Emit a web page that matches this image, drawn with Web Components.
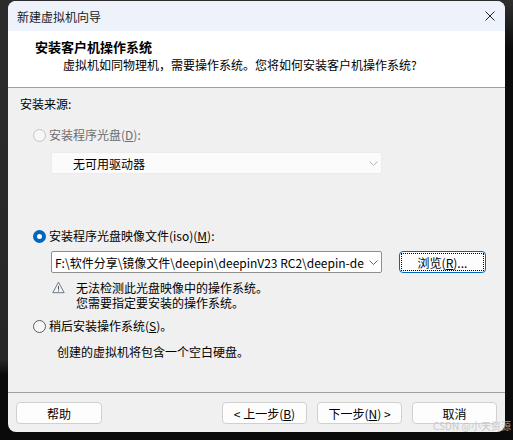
<!DOCTYPE html>
<html lang="zh">
<head>
<meta charset="utf-8">
<title>新建虚拟机向导</title>
<style>
  html, body { margin: 0; height: 100%; }
  body {
    width: 513px;
    height: 440px;
    overflow: hidden;
    background:
      linear-gradient(#2f2f2f, #0b0b0b 50px) right top / 8px 100% no-repeat,
      linear-gradient(#2b2b2b 0, #2b2b2b 55px, #262626 360px, #0a0a0a 375px);
    font-family: "Noto Sans CJK SC", "Noto Sans", sans-serif;
    font-size: 12px;
    color: #000;
  }
</style>
</head>
<body>
<wizard-window>
  <title-bar slot="title">新建虚拟机向导</title-bar>
  <wizard-header slot="header" heading="安装客户机操作系统">虚拟机如同物理机，需要操作系统。您将如何安装客户机操作系统?</wizard-header>

  <source-label>安装来源:</source-label>

  <radio-option disabled style="margin-top:13px">安装程序光盘(<u>D</u>):</radio-option>
  <combo-box disabled style="margin-top:8px;margin-left:31px"><span style="padding-left:18px">无可用驱动器</span></combo-box>

  <radio-option checked style="margin-top:53px">安装程序光盘映像文件(iso)(<u>M</u>):</radio-option>
  <file-row style="margin-top:6px;margin-left:31px">
    <combo-box>F:\软件分享\镜像文件\deepin\deepinV23 RC2\deepin-de</combo-box>
    <wizard-button focused style="width:87px;margin-left:17px">浏览(<u>R</u>)...</wizard-button>
  </file-row>
  <warning-note style="margin-top:7px">无法检测此光盘映像中的操作系统。<br>您需要指定要安装的操作系统。</warning-note>

  <radio-option style="margin-top:7px">稍后安装操作系统(<u>S</u>)。</radio-option>
  <source-label style="margin-top:8px;margin-left:37px">创建的虚拟机将包含一个空白硬盘。</source-label>

  <wizard-button slot="help" style="width:86px">帮助</wizard-button>
  <wizard-button slot="nav" style="width:85px">&lt; 上一步(<u>B</u>)</wizard-button>
  <wizard-button slot="nav" style="width:85px">下一步(<u>N</u>) &gt;</wizard-button>
  <wizard-button slot="nav" style="width:85px">取消</wizard-button>
</wizard-window>
<water-mark>CSDN @小天资源</water-mark>

<script>
// Small helper so every element below gets an open shadow root from its markup.
class ShadowElement extends HTMLElement {
  constructor (markup) {
    super()
    this.attachShadow({ mode: 'open' }).innerHTML = markup
  }
}

customElements.define('wizard-window', class extends ShadowElement {
  constructor () {
    super(`
      <style>
        :host {
          display: flex;
          flex-direction: column;
          width: 497px;
          height: 431px;
          margin: 1px 0 0 8px;
          background: #f0f0f0;
          border-radius: 8px;
          overflow: hidden;
        }
        .body { flex: 1; display: flex; flex-direction: column; padding: 7px 0 0 12px; }
        footer {
          display: flex;
          justify-content: space-between;
          height: 40px;
          box-sizing: border-box;
          border-top: 1px solid #a0a0a0;
          padding: 9px 8px 0 8px;
        }
        .nav { display: flex; gap: 10px; }
      </style>
      <slot name="title"></slot>
      <slot name="header"></slot>
      <div class="body"><slot></slot></div>
      <footer>
        <slot name="help"></slot>
        <div class="nav"><slot name="nav"></slot></div>
      </footer>
    `)
  }
})

customElements.define('title-bar', class extends ShadowElement {
  constructor () {
    super(`
      <style>
        :host {
          display: flex;
          align-items: center;
          justify-content: space-between;
          height: 30px;
          padding: 0 10px 0 9px;
          background: #eef2fa;
          font-size: 12px;
          color: #1a1a1a;
        }
        svg { display: block; }
      </style>
      <span><slot></slot></span>
      <svg width="10" height="10" viewBox="0 0 10 10"><path d="M.5.5l9 9M9.5.5l-9 9" stroke="#222" fill="none"/></svg>
    `)
  }
})

customElements.define('wizard-header', class extends ShadowElement {
  constructor () {
    super(`
      <style>
        :host {
          display: block;
          height: 57px;
          box-sizing: border-box;
          background: #fff;
          border-bottom: 1px solid #a0a0a0;
          padding: 6px 0 0 27px;
        }
        h1 { margin: 0; font-size: 13px; line-height: 19px; font-weight: 700; }
        p { margin: 0 0 0 28px; font-size: 12px; line-height: 18px; }
      </style>
      <h1></h1>
      <p><slot></slot></p>
    `)
    this.shadowRoot.querySelector('h1').textContent = this.getAttribute('heading')
  }
})

customElements.define('source-label', class extends ShadowElement {
  constructor () {
    super(`
      <style>
        :host { display: block; font-size: 12px; line-height: 18px; }
      </style>
      <slot></slot>
    `)
  }
})

customElements.define('radio-option', class extends ShadowElement {
  constructor () {
    super(`
      <style>
        :host {
          display: flex;
          align-items: center;
          gap: 3px;
          margin-left: 13px;
          font-size: 12px;
          line-height: 18px;
        }
        :host([disabled]) { color: #6d6d6d; }
        i {
          width: 13px;
          height: 13px;
          box-sizing: border-box;
          border: 1px solid #5c5c5c;
          border-radius: 50%;
          background: #f6f6f6;
        }
        :host([disabled]) i { border-color: #c4c4c4; }
        :host([checked]) i { border: 4px solid #0067c0; background: #fff; }
      </style>
      <i></i>
      <span><slot></slot></span>
    `)
  }
})

customElements.define('combo-box', class extends ShadowElement {
  constructor () {
    super(`
      <style>
        :host {
          display: flex;
          align-items: center;
          width: 331px;
          height: 22px;
          box-sizing: border-box;
          background: #fff;
          border: 1px solid #8e8e8e;
          border-radius: 2px;
          font-size: 12px;
        }
        :host([disabled]) { background: #fbfbfb; border-color: #ececec; }
        .text { flex: 1; min-width: 0; overflow: hidden; white-space: nowrap; padding-left: 3px; line-height: 19px; }
        svg { flex: none; margin: 0 3px 0 4px; }
        :host([disabled]) path { stroke: #b5b5b5; }
      </style>
      <span class="text"><slot></slot></span>
      <svg width="9" height="5" viewBox="0 0 9 5"><path d="M.5.5l4 4 4-4" stroke="#666" fill="none"/></svg>
    `)
  }
})

customElements.define('file-row', class extends ShadowElement {
  constructor () {
    super(`
      <style>
        :host { display: flex; align-items: center; }
      </style>
      <slot></slot>
    `)
  }
})

customElements.define('wizard-button', class extends ShadowElement {
  constructor () {
    super(`
      <style>
        :host {
          display: flex;
          align-items: center;
          justify-content: center;
          height: 22px;
          box-sizing: border-box;
          background: #fdfdfd;
          border: 1px solid #d0d0d0;
          border-radius: 4px;
          font-size: 12px;
          position: relative;
        }
        :host([focused]) { border: 1px solid #0067c0; }
        :host([focused])::after {
          content: "";
          position: absolute;
          inset: 1px;
          border: 1px dotted #000;
        }
      </style>
      <slot></slot>
    `)
  }
})

customElements.define('warning-note', class extends ShadowElement {
  constructor () {
    super(`
      <style>
        :host {
          display: flex;
          gap: 11px;
          margin-left: 32px;
          font-size: 12px;
          line-height: 15px;
        }
        svg { flex: none; margin-top: 1px; }
      </style>
      <svg width="13" height="13" viewBox="0 0 13 13"><path d="M6.5 1.2L12.2 11.7H.8Z" fill="#f4f4f4" stroke="#6c7a86"/><path d="M6.5 5v3.6M6.5 9.5v1" stroke="#45505a" fill="none"/></svg>
      <div><slot></slot></div>
    `)
  }
})

customElements.define('water-mark', class extends ShadowElement {
  constructor () {
    super(`
      <style>
        :host {
          position: absolute;
          left: 433px;
          top: 419px;
          font-size: 10px;
          line-height: 14px;
          white-space: nowrap;
          color: rgba(190, 190, 190, .8);
        }
      </style>
      <slot></slot>
    `)
  }
})
</script>
</body>
</html>
